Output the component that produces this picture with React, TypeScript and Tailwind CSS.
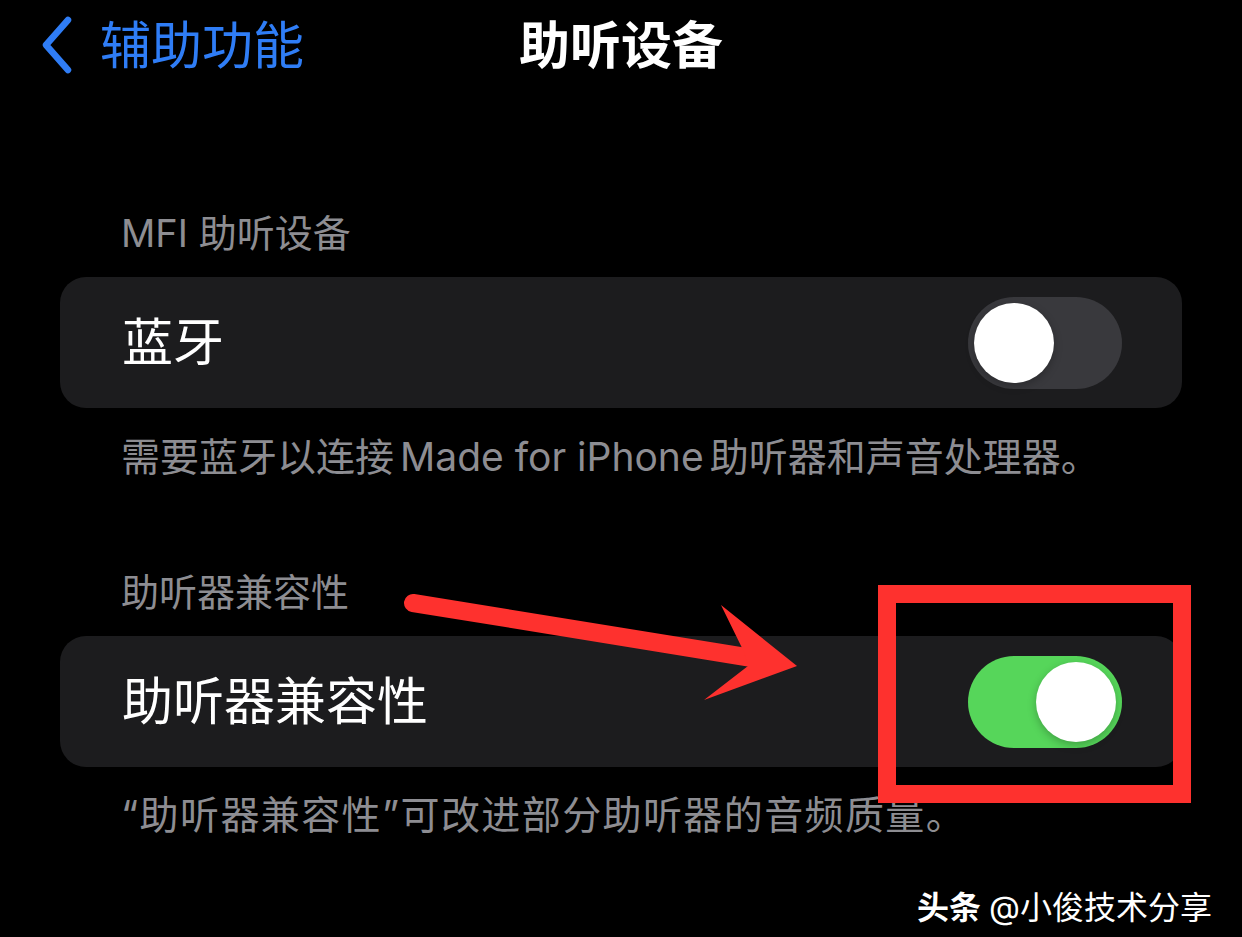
import React from "react";

type ToggleProps = {
  on: boolean;
};

function Toggle({ on }: ToggleProps) {
  return (
    <div
      className={
        on
          ? "flex h-[92px] w-[154px] items-center justify-end rounded-full bg-[#56d65a] px-[6px]"
          : "flex h-[92px] w-[154px] items-center justify-start rounded-full bg-[#39393d] px-[6px]"
      }
    >
      <div className="h-[80px] w-[80px] rounded-full bg-white shadow-[0_3px_8px_rgba(0,0,0,0.25)]" />
    </div>
  );
}

type SettingRowProps = {
  label: string;
  on: boolean;
};

function SettingRow({ label, on }: SettingRowProps) {
  return (
    <div className="flex h-[131px] items-center justify-between rounded-[26px] bg-[#1c1c1e] pl-[62px] pr-[60px]">
      <span className="text-[51px] leading-none text-white">{label}</span>
      <Toggle on={on} />
    </div>
  );
}

function SectionLabel({ children }: { children: React.ReactNode }) {
  return (
    <div className="pl-[121px] text-[38px] leading-[44px] text-[#8d8d92]">
      {children}
    </div>
  );
}

function SectionNote({
  children,
  className = "",
}: {
  children: React.ReactNode;
  className?: string;
}) {
  return (
    <div
      className={`pl-[121px] text-[39px] leading-[44px] text-[#8d8d92] ${className}`}
    >
      {children}
    </div>
  );
}

// red callout drawn over the second toggle
function Callout() {
  return (
    <svg
      className="pointer-events-none absolute left-0 top-0"
      width={1242}
      height={937}
      viewBox="0 0 1242 937"
    >
      <line
        x1={413}
        y1={603}
        x2={752}
        y2={658}
        stroke="#fe312e"
        strokeWidth={18}
        strokeLinecap="round"
      />
      <polygon
        points="721,605 797,666 704,700 748,666 744,652"
        fill="#fe312e"
      />
      <rect
        x={887}
        y={594}
        width={295}
        height={200}
        fill="none"
        stroke="#fe312e"
        strokeWidth={18}
      />
    </svg>
  );
}

export default function App() {
  return (
    <div
      className="relative h-[937px] w-[1242px] overflow-hidden bg-black"
      style={{ fontFamily: '"Inter", "Noto Sans CJK SC", sans-serif' }}
    >
      <div className="flex h-[90px] items-center">
        <div className="flex w-[400px] items-center pl-[40px]">
          <svg width={34} height={60} viewBox="0 0 34 60" fill="none">
            <path
              d="M28 5 L6 30 L28 55"
              stroke="#2f7df6"
              strokeWidth={6.5}
              strokeLinecap="round"
              strokeLinejoin="round"
            />
          </svg>
          <span className="ml-[26px] text-[51px] leading-none text-[#2f7df6]">
            辅助功能
          </span>
        </div>
        <div className="flex-1 pr-[400px] text-center text-[51px] font-bold leading-none text-white">
          助听设备
        </div>
      </div>

      <div className="mt-[121px] mb-[22px]">
        <SectionLabel>MFI 助听设备</SectionLabel>
      </div>
      <div className="px-[60px]">
        <SettingRow label="蓝牙" on={false} />
      </div>
      <div className="mt-[27px]">
        <SectionNote>
          需要蓝牙以连接<span className="mx-[6px]">Made for iPhone</span>
          助听器和声音处理器。
        </SectionNote>
      </div>

      <div className="mt-[91px] mb-[22px]">
        <SectionLabel>助听器兼容性</SectionLabel>
      </div>
      <div className="px-[60px]">
        <SettingRow label="助听器兼容性" on={true} />
      </div>
      <div className="mt-[26px]">
        <SectionNote className="tracking-[1.4px]">
          “助听器兼容性”可改进部分助听器的音频质量。
        </SectionNote>
      </div>

      <div className="mt-[55px] flex justify-end pr-[30px] text-[32px] leading-none text-white">
        <span className="font-bold">头条</span>
        <span className="ml-[8px]">@小俊技术分享</span>
      </div>

      <Callout />
    </div>
  );
}
